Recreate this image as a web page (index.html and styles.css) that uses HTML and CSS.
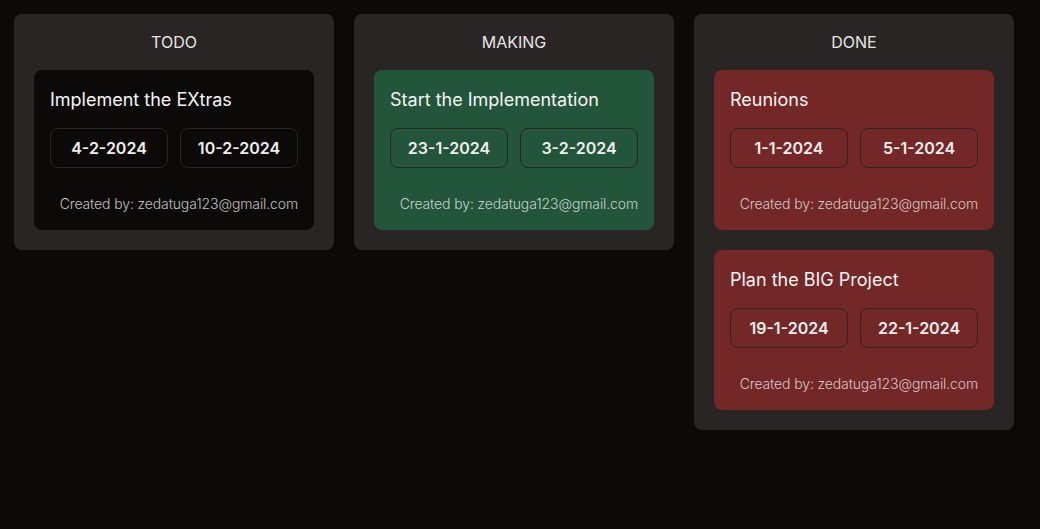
FILE: index.html
```html
<!DOCTYPE html>
<html>
<head>
<meta charset="utf-8">
<link rel="stylesheet" href="styles.css">
</head>
<body>
<div class="board">
  <section class="column">
    <h2 class="column-title">TODO</h2>
    <div class="card card-dark">
      <h3 class="card-title">Implement the EXtras</h3>
      <div class="dates">
        <span class="date">4-2-2024</span>
        <span class="date">10-2-2024</span>
      </div>
      <p class="creator">Created by: zedatuga123@gmail.com</p>
    </div>
  </section>
  <section class="column">
    <h2 class="column-title">MAKING</h2>
    <div class="card card-green">
      <h3 class="card-title">Start the Implementation</h3>
      <div class="dates">
        <span class="date">23-1-2024</span>
        <span class="date">3-2-2024</span>
      </div>
      <p class="creator">Created by: zedatuga123@gmail.com</p>
    </div>
  </section>
  <section class="column">
    <h2 class="column-title">DONE</h2>
    <div class="card card-red">
      <h3 class="card-title">Reunions</h3>
      <div class="dates">
        <span class="date">1-1-2024</span>
        <span class="date">5-1-2024</span>
      </div>
      <p class="creator">Created by: zedatuga123@gmail.com</p>
    </div>
    <div class="card card-red">
      <h3 class="card-title">Plan the BIG Project</h3>
      <div class="dates">
        <span class="date">19-1-2024</span>
        <span class="date">22-1-2024</span>
      </div>
      <p class="creator">Created by: zedatuga123@gmail.com</p>
    </div>
  </section>
</div>
</body>
</html>
```
FILE: styles.css
```css
html, body {
  margin: 0;
  padding: 0;
  background: #0c0a09;
  font-family: Inter, "Noto Sans", sans-serif;
  color: #e7e5e4;
}
.board {
  display: flex;
  align-items: flex-start;
  gap: 20px;
  padding: 14px;
}
.column {
  width: 320px;
  box-sizing: border-box;
  background: #292524;
  border-radius: 8px;
  padding: 20px;
  display: flex;
  flex-direction: column;
  gap: 20px;
}
.column-title {
  margin: 0;
  font-size: 16px;
  font-weight: 400;
  line-height: 16px;
  text-align: center;
  color: #e7e5e4;
}
.card {
  border-radius: 8px;
  padding: 16px;
  height: 160px;
  box-sizing: border-box;
  display: flex;
  flex-direction: column;
}
.card-dark { background: #0c0a09; }
.card-green { background: #22553a; }
.card-red { background: #732727; }
.card-title {
  margin: 2px 0 0 0;
  font-size: 18px;
  font-weight: 400;
  line-height: 24px;
  color: #f5f5f4;
}
.dates {
  display: flex;
  gap: 12px;
  margin-top: 16px;
}
.date {
  flex: 1;
  height: 40px;
  box-sizing: border-box;
  border: 1px solid #292524;
  border-radius: 8px;
  display: flex;
  align-items: center;
  justify-content: center;
  font-size: 16px;
  font-weight: 600;
  color: #f0efee;
}
.creator {
  margin: auto 0 0 0;
  text-align: right;
  font-size: 14px;
  font-weight: 300;
  letter-spacing: -0.12px;
  line-height: 20px;
  color: rgba(245, 245, 244, 0.78);
}
```
